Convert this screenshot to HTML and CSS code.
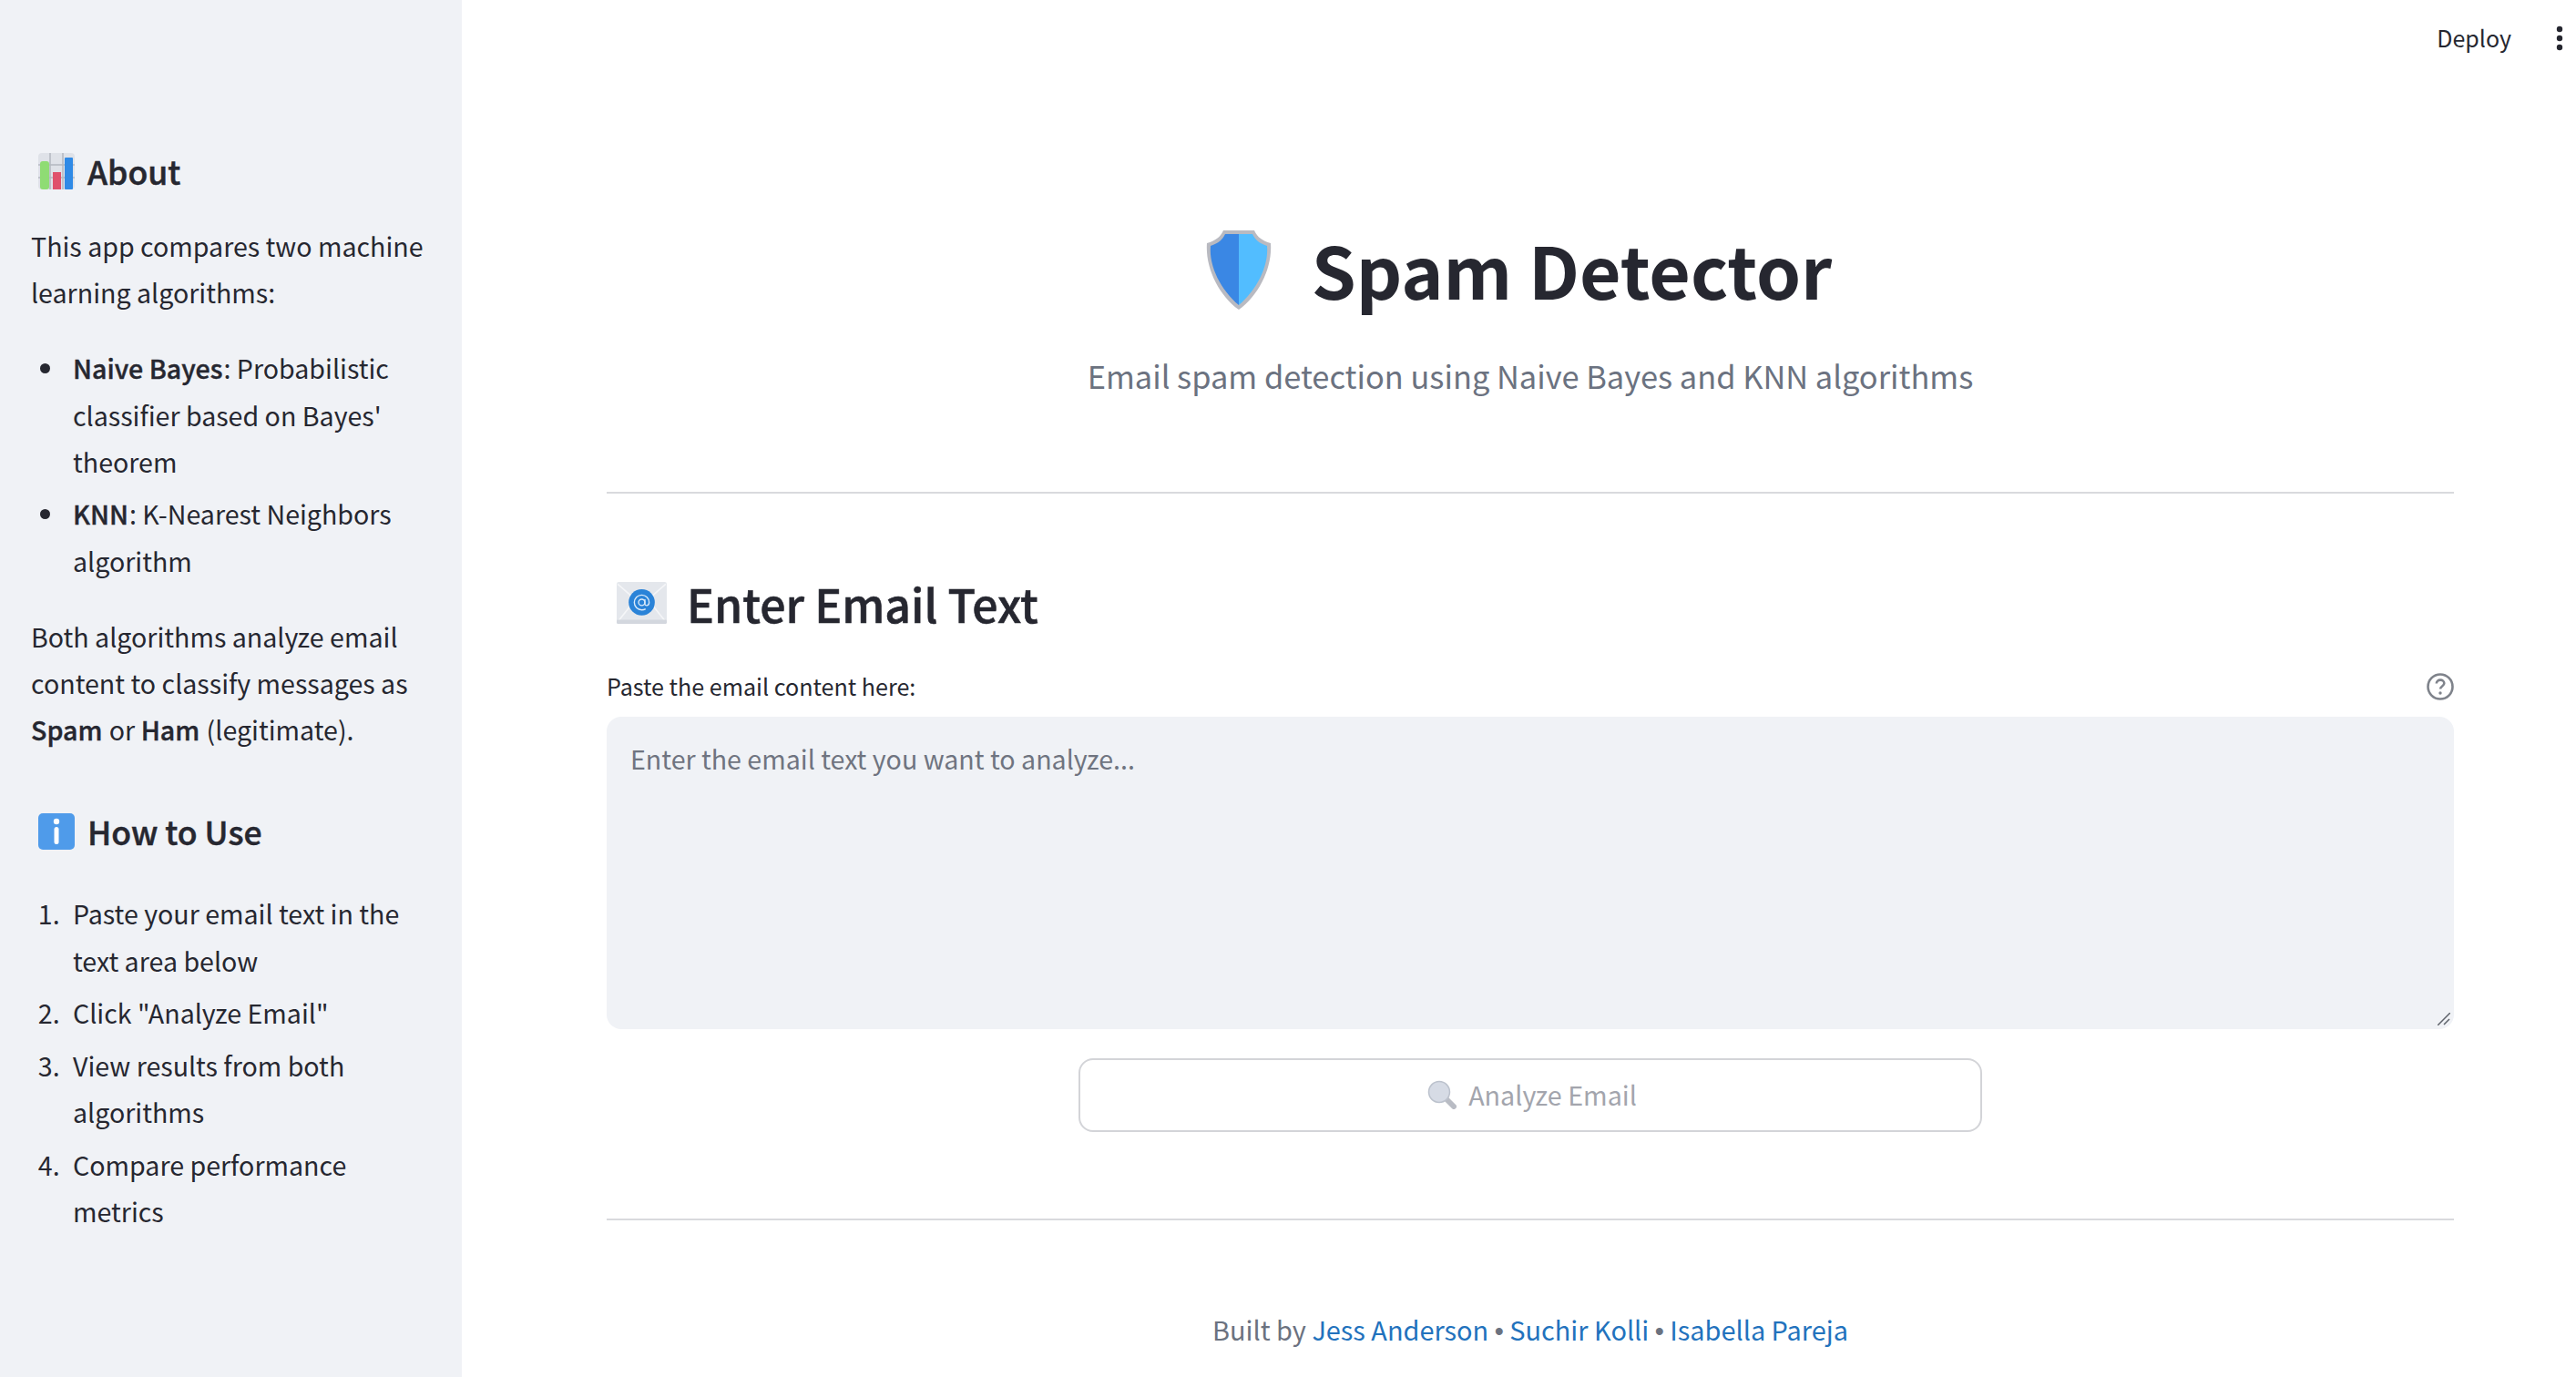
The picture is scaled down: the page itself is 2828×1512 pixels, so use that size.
FILE: index.html
```html
<!DOCTYPE html>
<html lang="en">
  <head>
    <meta charset="UTF-8" />
    <title>Spam Detector</title>
    <link rel="stylesheet" href="styles.css">
  </head>
  <body>
    <div class="app">
      <div class="sidebar">
        <h3 class="side-title">
          <svg class="side-icon" viewBox="0 0 40 40">
            <rect width="40" height="40" rx="4" fill="#dfe2e8"/>
            <path d="M13 0v40M27 0v40M0 13h40M0 27h40" stroke="#b4b8c0" stroke-width="1.5"/>
            <rect x="2" y="9" width="10" height="31" rx="3" fill="#8fdc74"/>
            <rect x="16" y="21" width="9" height="19" fill="#e0516b"/>
            <rect x="29" y="5" width="9" height="35" rx="1" fill="#2f8ae6"/>
          </svg>
          About
        </h3>
        <p>This app compares two machine learning algorithms:</p>
        <ul>
          <li><strong>Naive Bayes</strong>: Probabilistic classifier based on Bayes' theorem</li>
          <li><strong>KNN</strong>: K-Nearest Neighbors algorithm</li>
        </ul>
        <p>Both algorithms analyze email content to classify messages as <strong>Spam</strong> or <strong>Ham</strong> (legitimate).</p>
        <h3 class="side-title how-title">
          <svg class="side-icon" viewBox="0 0 40 40">
            <rect width="40" height="40" rx="5" fill="#4f9bea"/>
            <circle cx="20" cy="9" r="3.2" fill="#fff"/>
            <rect x="17.5" y="15" width="5" height="19" rx="2.5" fill="#fff"/>
          </svg>
          How to Use
        </h3>
        <ol>
          <li>Paste your email text in the text area below</li>
          <li>Click "Analyze Email"</li>
          <li>View results from both algorithms</li>
          <li>Compare performance metrics</li>
        </ol>
      </div>

      <div class="main">
        <div class="toolbar">
          <span class="deploy">Deploy</span>
          <svg class="menu-dots" viewBox="0 0 8 28">
            <circle cx="4" cy="4" r="3.2"/>
            <circle cx="4" cy="14" r="3.2"/>
            <circle cx="4" cy="24" r="3.2"/>
          </svg>
        </div>

        <div class="content">
          <div class="hero">
            <h1 class="title">
              <svg class="shield" viewBox="0 0 72 89">
                <path d="M19 1h34c3 7 8 11 18 14 2 27-13 57-35 73C14 72-1 42 1 15 11 12 16 8 19 1z" fill="#b9bac1"/>
                <path d="M21 5h15v78C17 67 3 41 5 18c9-3 13-7 16-13z" fill="#3a87e4"/>
                <path d="M36 5h15c3 6 7 10 16 13 2 23-12 49-31 65z" fill="#52bdff"/>
              </svg>
              Spam Detector
            </h1>
            <p class="subtitle">Email spam detection using Naive Bayes and KNN algorithms</p>
          </div>

          <hr class="rule">

          <h2 class="section-title">
            <svg class="mail-icon" viewBox="0 0 48 40" preserveAspectRatio="none">
              <rect width="48" height="40" rx="2" fill="#e4e7ec"/>
              <path d="M1 2l23 20L47 2M1 38l16-20M47 38L31 18" fill="none" stroke="#f5f6f8" stroke-width="1.5"/>
              <rect y="36" width="48" height="4" rx="1" fill="#d3d7de"/>
              <circle cx="24" cy="19.5" r="12.5" fill="#2a83d8"/>
              <circle cx="24" cy="19.5" r="3" fill="none" stroke="#dcebfa" stroke-width="1.2"/>
              <path d="M27 16.6v4.2c0 2.7 4.1 2.1 4.1-1.3 0-3.9-3.1-7-7.1-7s-7.1 3.1-7.1 7.1 3.1 7.1 7.1 7.1c1.5 0 2.7-.4 3.7-1" fill="none" stroke="#dcebfa" stroke-width="1.2"/>
            </svg>
            Enter Email Text
          </h2>

          <div class="field-label">
            <span>Paste the email content here:</span>
            <svg class="help-icon" viewBox="0 0 30 30">
              <circle cx="15" cy="15" r="13.5" fill="none" stroke="#7f838b" stroke-width="2.6"/>
              <path d="M10.8 11.6c0-2.5 2-4 4.3-4s4.2 1.5 4.2 3.7c0 3.2-4.2 3.2-4.2 6.2" fill="none" stroke="#7f838b" stroke-width="2.6"/>
              <circle cx="15" cy="22" r="1.7" fill="#7f838b"/>
            </svg>
          </div>
          <div class="input-wrap">
            <textarea class="email-input" placeholder="Enter the email text you want to analyze..."></textarea>
            <svg class="resize-grip" viewBox="0 0 14 14">
              <path d="M0 14L14 0M7 13l6-6" stroke="#5f636b" stroke-width="1.5"/>
            </svg>
          </div>

          <div class="button-row">
            <button class="btn" disabled>
              <svg class="search-icon" viewBox="0 0 32 32">
                <path d="M21 21l8 8" stroke="#b9bcc4" stroke-width="6" stroke-linecap="round"/>
                <circle cx="13" cy="13" r="11.5" fill="#d6dbe5" stroke="#bcc2cd" stroke-width="1.5"/>
              </svg>
              Analyze Email
            </button>
          </div>

          <hr class="rule rule-bottom">

          <p class="footer">Built by <a href="#">Jess Anderson</a> <span class="sep">•</span> <a href="#">Suchir Kolli</a> <span class="sep">•</span> <a href="#">Isabella Pareja</a></p>
        </div>
      </div>
    </div>
  </body>
</html>
```
FILE: styles.css
```css
body {
  margin: 0;
  font-family: "Noto Sans CJK SC", "Open Sans", sans-serif;
  color: #262730;
  background: white;
}

.app {
  display: flex;
  height: 1512px;
  overflow: hidden;
}

.sidebar {
  width: 507px;
  box-sizing: border-box;
  flex-shrink: 0;
  background: #f0f2f6;
  padding: 158px 34px 0 34px;
  font-size: 28.6px;
  line-height: 51.2px;
}

.side-title {
  display: flex;
  align-items: center;
  gap: 14px;
  margin: 0 0 26px 0;
  padding-left: 8px;
  font-size: 35.5px;
  line-height: 60px;
  font-weight: 500;
  -webkit-text-stroke: 0.5px #262730;
}

.how-title {
  margin-top: 57px;
  margin-bottom: 34px;
}

.side-icon {
  width: 40px;
  height: 40px;
}

.sidebar p {
  margin: 0 0 32px 0;
}

.sidebar strong {
  margin-right: 1px;
  font-weight: 500;
  -webkit-text-stroke: 0.4px #262730;
}

.sidebar ul,
.sidebar ol {
  margin: 0 0 32px 0;
}

.sidebar ul {
  padding-left: 39px;
}

.sidebar ol {
  padding-left: 38px;
}

.sidebar li {
  margin-bottom: 6.4px;
}

.sidebar ul li {
  padding-left: 7px;
}

.sidebar ol li {
  padding-left: 8px;
}

.main {
  flex: 1;
  min-width: 0;
}

.toolbar {
  display: flex;
  justify-content: flex-end;
  align-items: center;
  gap: 49px;
  height: 84px;
  padding-right: 14px;
}

.deploy {
  margin-bottom: 3px;
  font-size: 25px;
}

.menu-dots {
  width: 8px;
  height: 28px;
  fill: #262730;
}

.content {
  padding: 0 134px 0 159px;
}

.hero {
  text-align: center;
  padding-top: 155px;
}

.title {
  display: flex;
  justify-content: center;
  align-items: center;
  gap: 44px;
  margin: 0;
  padding-right: 25px;
  font-size: 78.5px;
  line-height: 112px;
  font-weight: 700;
}

.shield {
  width: 72px;
  height: 89px;
  margin-top: 3px;
}

.subtitle {
  margin: 31px 0 0 0;
  font-size: 34.4px;
  line-height: 60px;
  color: #6b7280;
}

.rule {
  margin: 98px 0 0 0;
  border: none;
  border-top: 2px solid #d9dadd;
}

.section-title {
  display: flex;
  align-items: center;
  gap: 22px;
  margin: 85px 0 0 0;
  padding-left: 11px;
  font-size: 50px;
  line-height: 70px;
  font-weight: 500;
  -webkit-text-stroke: 0.6px #262730;
}

.mail-icon {
  width: 55px;
  height: 46px;
}

.field-label {
  display: flex;
  justify-content: space-between;
  align-items: center;
  margin-top: 36px;
  font-size: 25.1px;
  line-height: 40px;
}

.help-icon {
  width: 30px;
  height: 30px;
  margin-top: 1px;
}

.input-wrap {
  position: relative;
  margin-top: 14px;
}

.email-input {
  display: block;
  width: 100%;
  height: 343px;
  box-sizing: border-box;
  padding: 22px 26px;
  border: none;
  border-radius: 16px;
  background: #f0f2f6;
  font-family: inherit;
  font-size: 28.6px;
  line-height: 47px;
  color: #262730;
  resize: none;
}

.email-input::placeholder {
  color: #6f7480;
  opacity: 1;
}

.resize-grip {
  position: absolute;
  right: 4px;
  bottom: 4px;
  width: 14px;
  height: 14px;
}

.button-row {
  display: flex;
  justify-content: center;
  margin-top: 32px;
}

.btn {
  display: flex;
  justify-content: center;
  align-items: center;
  gap: 13px;
  width: 992px;
  height: 81px;
  padding: 0 0 2px 4px;
  border: 2px solid #d3d4d8;
  border-radius: 16px;
  background: white;
  font-family: inherit;
  font-size: 28.7px;
  color: #a3a5ad;
}

.search-icon {
  width: 32px;
  height: 32px;
}

.rule-bottom {
  margin-top: 95px;
}

.footer {
  margin: 94px 0 0 0;
  text-align: center;
  font-size: 28.9px;
  line-height: 50px;
  color: #6b7280;
}

.footer a {
  color: #2272bd;
  text-decoration: none;
}

.sep {
  font-family: "Liberation Sans", sans-serif;
}
```
